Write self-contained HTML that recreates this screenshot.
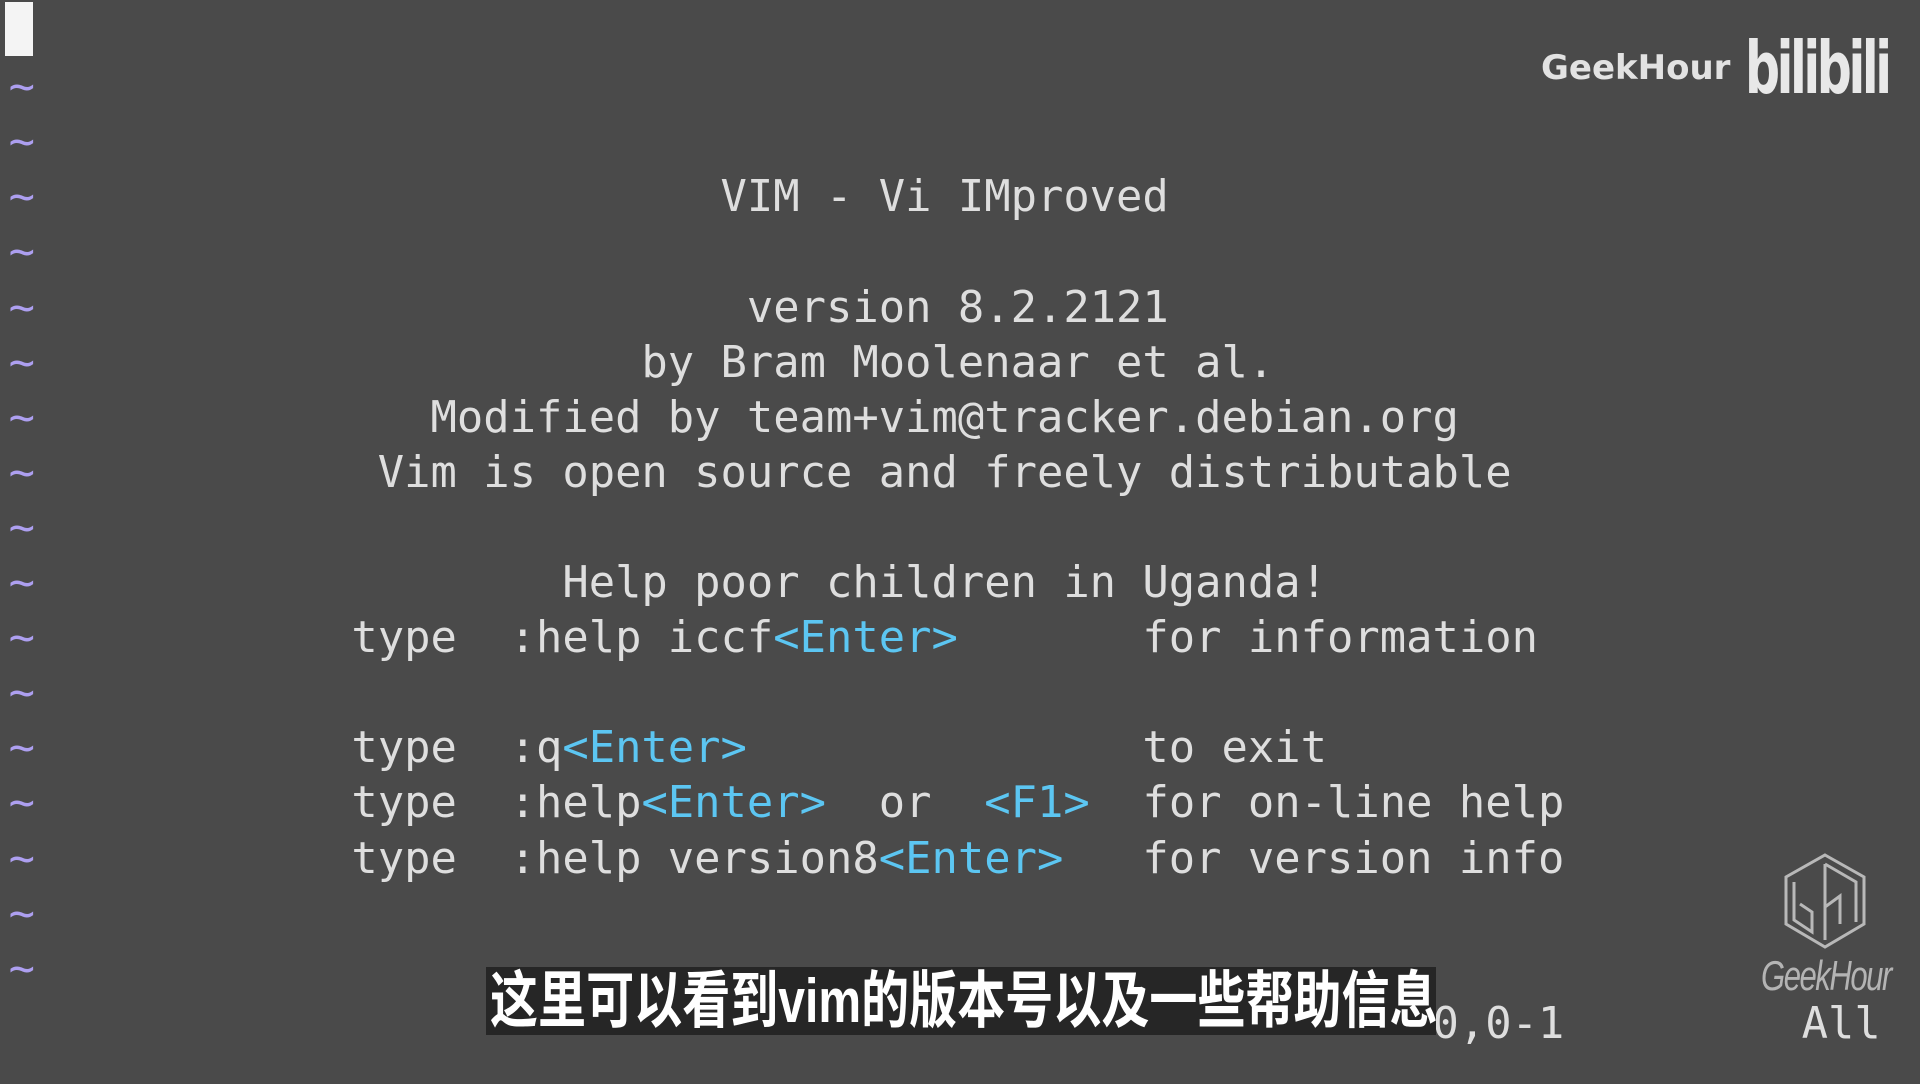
<!DOCTYPE html>
<html><head><meta charset="utf-8"><style>
html,body{margin:0;padding:0;width:1920px;height:1080px;overflow:hidden;background:#4a4a4a;}
.r{position:absolute;left:8.6px;height:55.1px;line-height:55.1px;white-space:pre;font-family:"DejaVu Sans Mono","Liberation Mono",monospace;font-size:43.8px;color:#dedede;}
.t{color:#ad9ff0;}
.b{color:#5cc6f2;}
.cur{position:absolute;left:5px;top:2px;width:28px;height:54px;background:#f4f4f4;}
.sub{position:absolute;left:486px;top:967px;width:950px;height:68px;background:#262626;}
.subt{position:absolute;left:490px;top:964px;font-family:"Liberation Sans","Noto Sans CJK SC",sans-serif;font-weight:bold;font-size:62px;line-height:76px;color:#fff;white-space:nowrap;transform:scaleX(0.775);transform-origin:0 0;}
.gh{position:absolute;left:1541px;top:48px;font-family:"DejaVu Sans","Liberation Sans",sans-serif;font-weight:bold;font-size:34px;color:#e2e2e2;}
.bl{position:absolute;left:1745px;top:26px;font-family:"DejaVu Sans","Liberation Sans",sans-serif;font-weight:bold;font-size:72px;letter-spacing:-5px;color:#e8e8e8;transform:scaleX(0.68);transform-origin:0 0;}
.gh2{position:absolute;left:1761px;top:952px;font-family:"Liberation Sans",sans-serif;font-style:italic;font-size:42px;color:#b4b4b4;letter-spacing:-2px;transform:scaleX(0.74);transform-origin:0 0;}
</style></head><body>
<div class="cur"></div>
<div style="position:absolute;left:0;top:4px;width:1920px;height:1080px">
<div class="r t" style="top:55.1px">~</div>
<div class="r t" style="top:110.2px">~</div>
<div class="r" style="top:165.3px"><span class="t">~</span>                          VIM - Vi IMproved</div>
<div class="r t" style="top:220.4px">~</div>
<div class="r" style="top:275.5px"><span class="t">~</span>                           version 8.2.2121</div>
<div class="r" style="top:330.6px"><span class="t">~</span>                       by Bram Moolenaar et al.</div>
<div class="r" style="top:385.7px"><span class="t">~</span>               Modified by team+vim@tracker.debian.org</div>
<div class="r" style="top:440.8px"><span class="t">~</span>             Vim is open source and freely distributable</div>
<div class="r t" style="top:495.9px">~</div>
<div class="r" style="top:551px"><span class="t">~</span>                    Help poor children in Uganda!</div>
<div class="r" style="top:606.1px"><span class="t">~</span>            type  :help iccf<span class="b">&lt;Enter&gt;</span>       for information</div>
<div class="r t" style="top:661.2px">~</div>
<div class="r" style="top:716.3px"><span class="t">~</span>            type  :q<span class="b">&lt;Enter&gt;</span>               to exit</div>
<div class="r" style="top:771.4px"><span class="t">~</span>            type  :help<span class="b">&lt;Enter&gt;</span>  or  <span class="b">&lt;F1&gt;</span>  for on-line help</div>
<div class="r" style="top:826.5px"><span class="t">~</span>            type  :help version8<span class="b">&lt;Enter&gt;</span>   for version info</div>
<div class="r t" style="top:881.6px">~</div>
<div class="r t" style="top:936.7px">~</div>
<div class="r" style="top:991.8px">                                                      0,0-1         All</div>
</div>
<div class="sub"></div>
<div class="subt">这里可以看到vim的版本号以及一些帮助信息</div>
<div class="gh">GeekHour</div>
<div class="bl">bilibili</div>
<svg style="position:absolute;left:1780px;top:852px" width="90" height="98" viewBox="0 0 90 98" fill="none" stroke="#b8b8b8" stroke-width="3">
<path d="M45 3 L84 25 L84 72 L45 95 L6 72 L6 25 Z"/>
<path d="M45 12 L76 30 L76 70 M45 12 L45 88 M14 30 L14 68 L32 80 L32 60 L20 52 M45 55 L60 44 L60 72"/>
</svg>
<div class="gh2">GeekHour</div>
</body></html>
